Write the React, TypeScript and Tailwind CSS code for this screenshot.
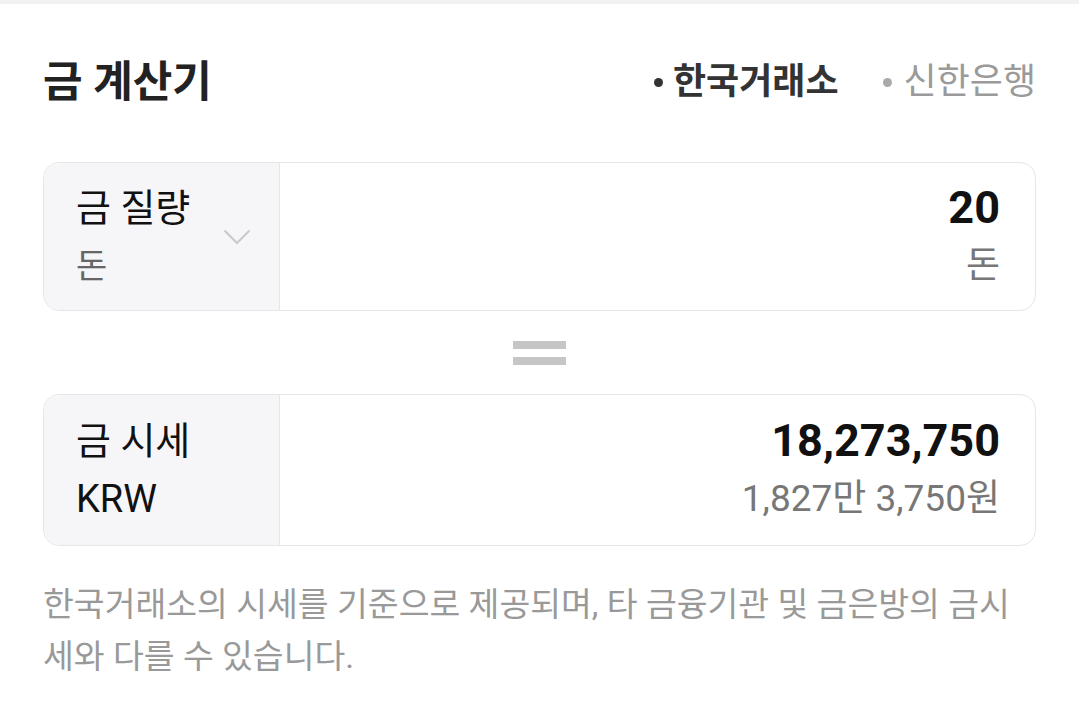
const font = { fontFamily: 'Roboto, "Noto Sans CJK KR", sans-serif' }

function Chevron() {
  return (
    <svg width="28" height="16" viewBox="0 0 28 16" fill="none">
      <path d="M1.5 1.5 L14 14 L26.5 1.5" stroke="#c9c9c9" strokeWidth="2" />
    </svg>
  )
}

function Row({ label, sub, value, unit, chevron, subClass, height }: {
  label: string
  sub: string
  value: string
  unit: string
  chevron?: boolean
  subClass: string
  height: string
}) {
  return (
    <div className={`flex rounded-[16px] border border-[#e6e6e6] overflow-hidden ${height}`}>
      <div className="w-[236px] shrink-0 bg-[#f6f6f8] border-r border-[#e6e6e6] flex items-center justify-between pl-[32px] pr-[28px]">
        <div className="flex flex-col gap-[14px]">
          <div className="text-[38px] leading-[44px] text-[#111]">{label}</div>
          <div className={subClass}>{sub}</div>
        </div>
        {chevron && <Chevron />}
      </div>
      <div className="flex-1 flex flex-col items-end justify-center gap-[14px] pr-[35px]">
        <div className="text-[45px] leading-[44px] font-bold text-[#111]">{value}</div>
        <div className="text-[37px] leading-[44px] text-[#777]">{unit}</div>
      </div>
    </div>
  )
}

export default function App() {
  return (
    <div className="w-[1079px] h-[707px] bg-white overflow-hidden" style={font}>
      <div className="h-[4px] bg-[#f1f1f1]" />
      <div className="px-[43px]">
        <div className="mt-[54px] flex items-center justify-between h-[48px]">
          <h1 className="text-[43px] leading-[48px] font-bold text-[#222]">금 계산기</h1>
          <div className="flex items-center gap-[44px] text-[36px] leading-[48px]">
            <div className="flex items-center gap-[10px] font-bold text-[#333]">
              <span className="w-[9px] h-[9px] rounded-full bg-[#333]" />
              한국거래소
            </div>
            <div className="flex items-center gap-[12px] text-[#9a9a9a]">
              <span className="w-[9px] h-[9px] rounded-full bg-[#aaa]" />
              신한은행
            </div>
          </div>
        </div>

        <div className="mt-[56px]">
          <Row label="금 질량" sub="돈" value="20" unit="돈" chevron height="h-[149px]" subClass="text-[34px] leading-[44px] text-[#666]" />
        </div>

        <div className="flex flex-col items-center gap-[8px] pt-[30px] pb-[29px]">
          <div className="w-[53px] h-[8px] bg-[#c6c6c6]" />
          <div className="w-[53px] h-[8px] bg-[#c6c6c6]" />
        </div>

        <Row label="금 시세" sub="KRW" value="18,273,750" unit="1,827만 3,750원" height="h-[152px]" subClass="text-[38px] leading-[44px] text-[#111]" />

        <p className="mt-[33px] text-[33.5px] leading-[52px] text-[#999] break-all">
          한국거래소의 시세를 기준으로 제공되며, 타 금융기관 및 금은방의 금시세와 다를 수 있습니다.
        </p>
      </div>
    </div>
  )
}
